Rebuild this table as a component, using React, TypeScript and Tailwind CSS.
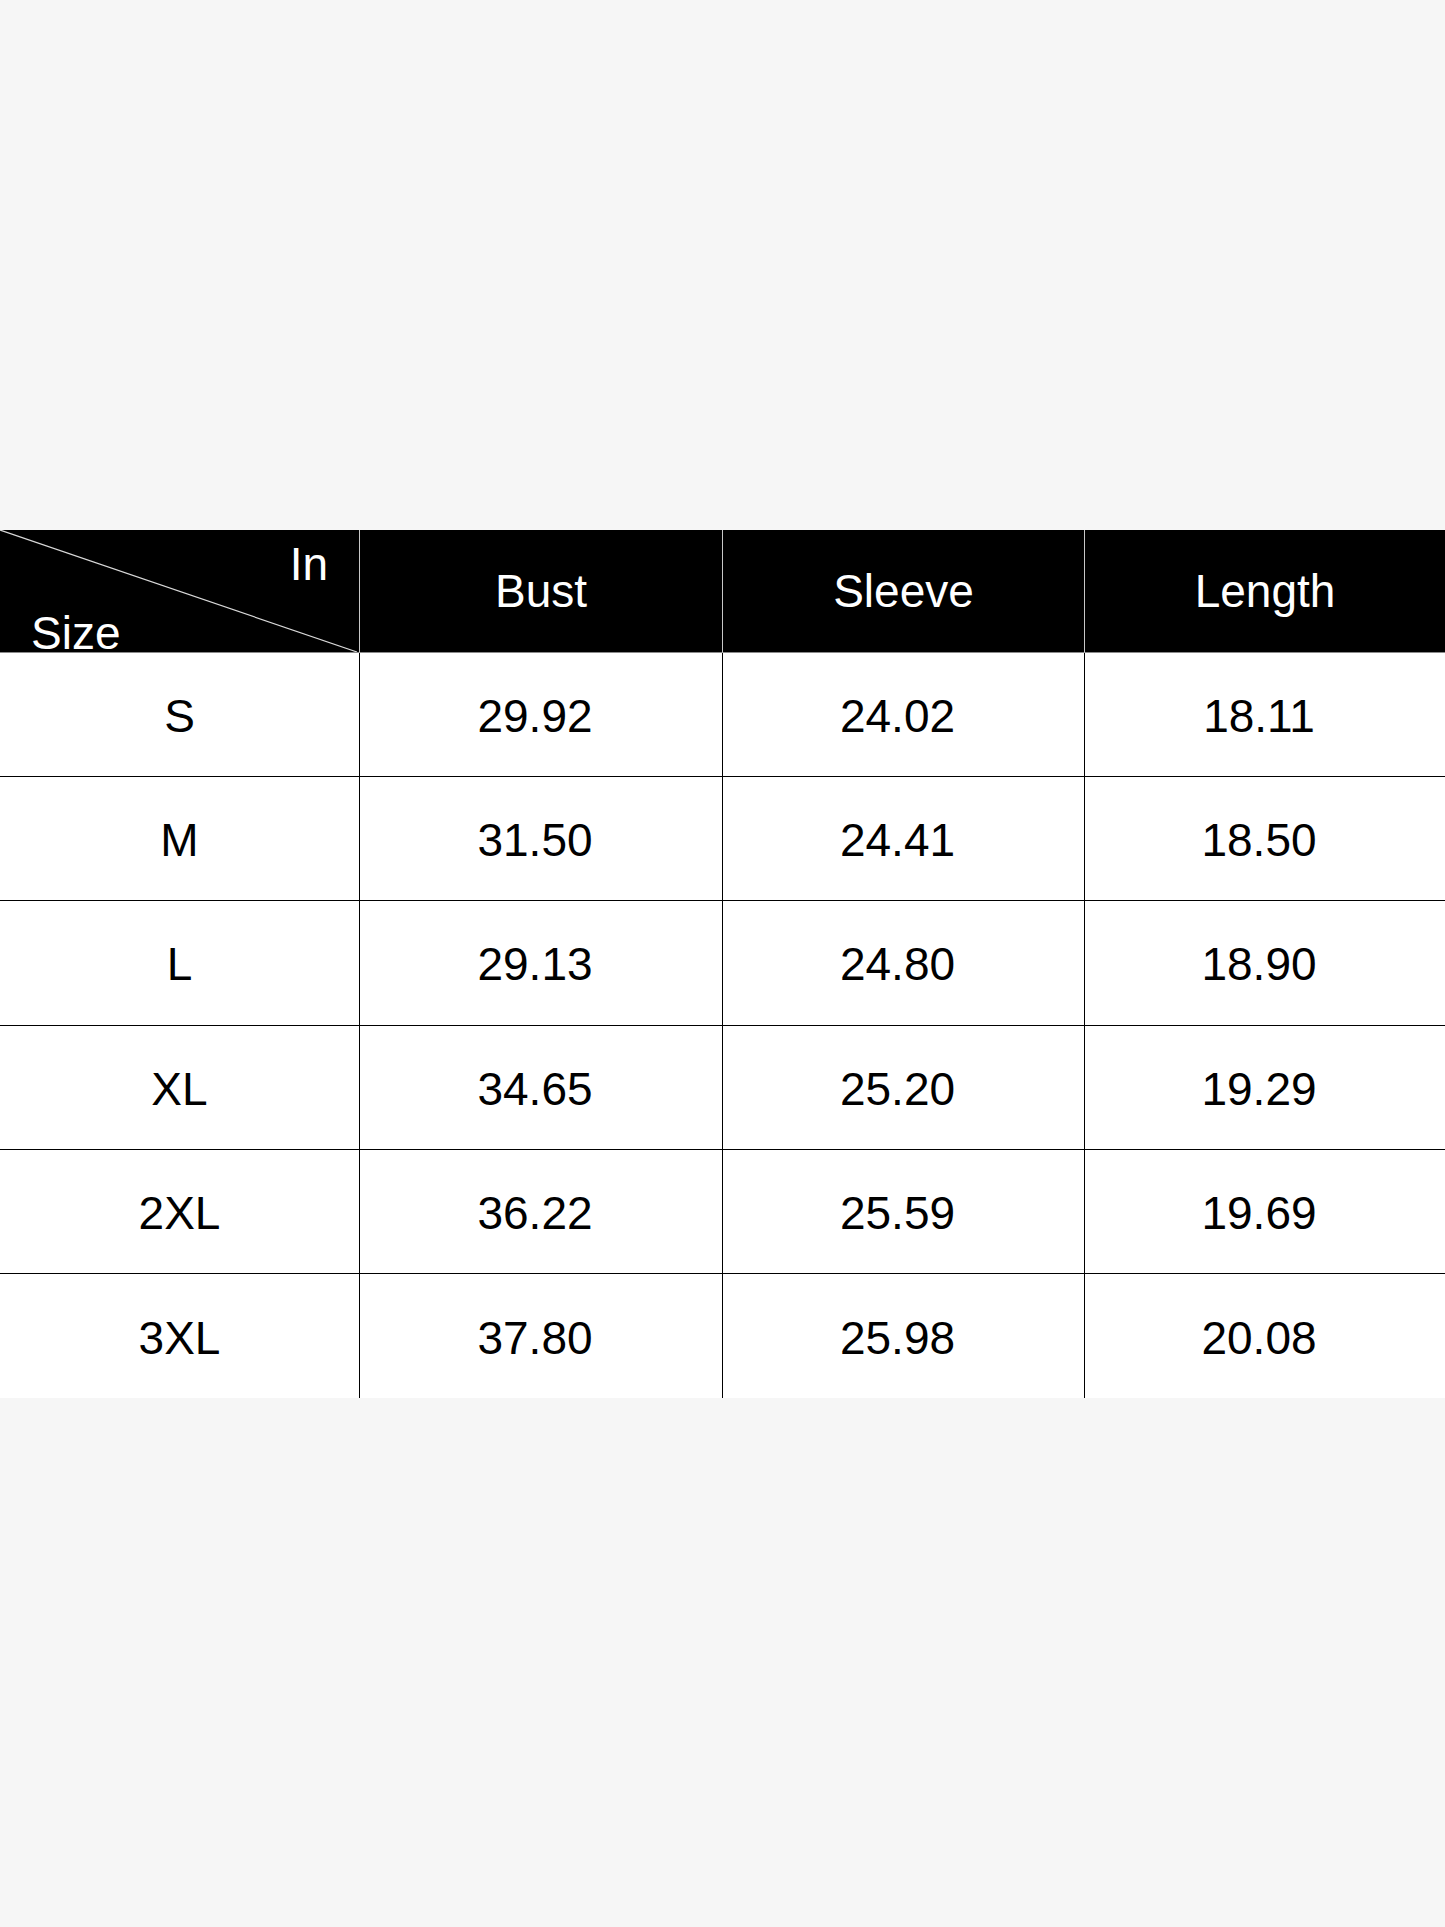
import React from "react";

const heads = ["Bust", "Sleeve", "Length"];

const rows = [
  { size: "S", values: ["29.92", "24.02", "18.11"] },
  { size: "M", values: ["31.50", "24.41", "18.50"] },
  { size: "L", values: ["29.13", "24.80", "18.90"] },
  { size: "XL", values: ["34.65", "25.20", "19.29"] },
  { size: "2XL", values: ["36.22", "25.59", "19.69"] },
  { size: "3XL", values: ["37.80", "25.98", "20.08"] },
];

const App = () => {
  return (
    <div className="min-h-[1927px] bg-[#f6f6f6] pt-[530px] font-['Liberation_Sans',Arial,sans-serif] text-[46px] leading-none">
      <div className="grid grid-cols-[359px_363px_362px_1fr]">
        {/* Header */}
        <div className="relative flex h-[123px] flex-col justify-between border-b border-[#8a8a8a] bg-black pt-[11px] text-white">
          <svg className="absolute inset-0 h-full w-full" viewBox="0 0 359 123" preserveAspectRatio="none">
            <line x1="0" y1="0" x2="357" y2="123" stroke="#d8d8d8" strokeWidth="1.2" />
          </svg>
          <span className="relative self-end pr-[31px]">In</span>
          <span className="relative mb-[-4px] pl-[31px]">Size</span>
        </div>
        {heads.map((h) => (
          <div
            key={h}
            className="flex h-[123px] items-center justify-center border-b border-l border-b-[#8a8a8a] border-l-[#c8c8c8] bg-black text-white"
          >
            {h}
          </div>
        ))}

        {/* Rows */}
        {rows.map((r, i) => {
          const line = i < rows.length - 1 ? "border-b-[1.5px] border-b-black" : "";
          return (
            <React.Fragment key={r.size}>
              <div className={`flex h-[124.2px] items-center justify-center bg-white pt-[3px] text-black ${line}`}>{r.size}</div>
              {r.values.map((v, j) => (
                <div
                  key={j}
                  className={`flex h-[124.2px] items-center justify-center border-l-[1.5px] border-l-black bg-white pr-[12px] pt-[3px] text-black ${line}`}
                >
                  {v}
                </div>
              ))}
            </React.Fragment>
          );
        })}
      </div>
    </div>
  );
};

export default App;
